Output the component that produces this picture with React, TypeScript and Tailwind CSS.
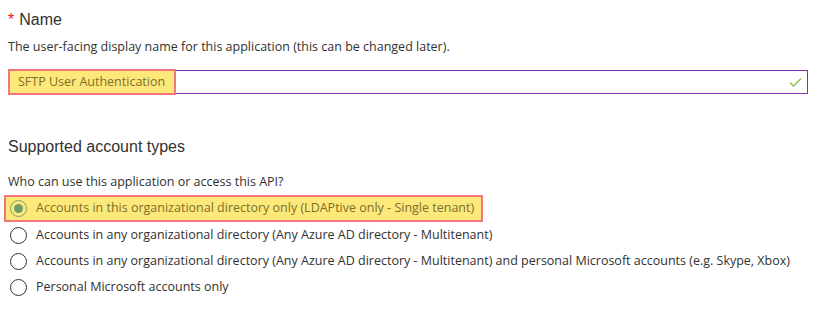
import React from "react"

const font = { fontFamily: '"Liberation Sans", Arial, sans-serif' }
const small = { fontFamily: '"Open Sans", "Liberation Sans", Arial, sans-serif' }

function Radio({ checked }: { checked?: boolean }) {
  if (checked) {
    return (
      <span className="flex h-[17px] w-[17px] shrink-0 items-center justify-center rounded-full border border-[#7f9a6c]">
        <span className="h-[9px] w-[9px] rounded-full bg-[#6f9c68]" />
      </span>
    )
  }
  return <span className="h-[17px] w-[17px] shrink-0 rounded-full border border-[#323130] bg-white" />
}

export default function App() {
  const options = [
    "Accounts in any organizational directory (Any Azure AD directory - Multitenant)",
    "Accounts in any organizational directory (Any Azure AD directory - Multitenant) and personal Microsoft accounts (e.g. Skype, Xbox)",
    "Personal Microsoft accounts only",
  ]

  return (
    <div className="min-h-[309px] w-[815px] bg-white pl-2 pt-[10px] text-[#323130]" style={font}>
      {/* Name */}
      <div className="flex items-baseline text-[16px] leading-[20px]">
        <span className="mr-[5px] text-[#e81123]">*</span>
        <span>Name</span>
      </div>
      <p className="mt-[9px] text-[12.5px] leading-[16px]" style={small}>
        The user-facing display name for this application (this can be changed later).
      </p>

      <div className="relative mt-[15px] flex h-[24px] w-[800px] items-center border border-[#8b2fb0] bg-white">
        <div className="absolute -left-px -top-[2px] h-[26px] w-[168px] border-2 border-[#f3767f] bg-[#fde87a]" />
        <span className="relative pl-[9px] text-[12.5px] text-[#7c6f2c]" style={small}>
          SFTP User Authentication
        </span>
        <svg className="absolute right-[5px] top-[6px]" width="13" height="10" viewBox="0 0 13 10" fill="none">
          <path d="M1 5.5 L4.5 9 L12 1.5" stroke="#8cbf52" strokeWidth="1.3" />
        </svg>
      </div>

      {/* Supported account types */}
      <h2 className="mt-[43px] text-[16px] leading-[20px]">Supported account types</h2>
      <p className="mt-[17px] text-[12.5px] leading-[16px]" style={small}>
        Who can use this application or access this API?
      </p>

      <div className="mt-[5px] flex flex-col" style={small}>
        <div className="-ml-1 flex h-[27px] w-[479px] items-center gap-[9px] border-2 border-[#f3767f] bg-[#fde87a] pl-1">
          <Radio checked />
          <span className="text-[12.5px] text-[#7c6f2c]">
            Accounts in this organizational directory only (LDAPtive only - Single tenant)
          </span>
        </div>
        {options.map((label) => (
          <div key={label} className="flex h-[26px] items-center gap-[9px] pl-[2px]">
            <Radio />
            <span className="text-[12.5px]">{label}</span>
          </div>
        ))}
      </div>
    </div>
  )
}
